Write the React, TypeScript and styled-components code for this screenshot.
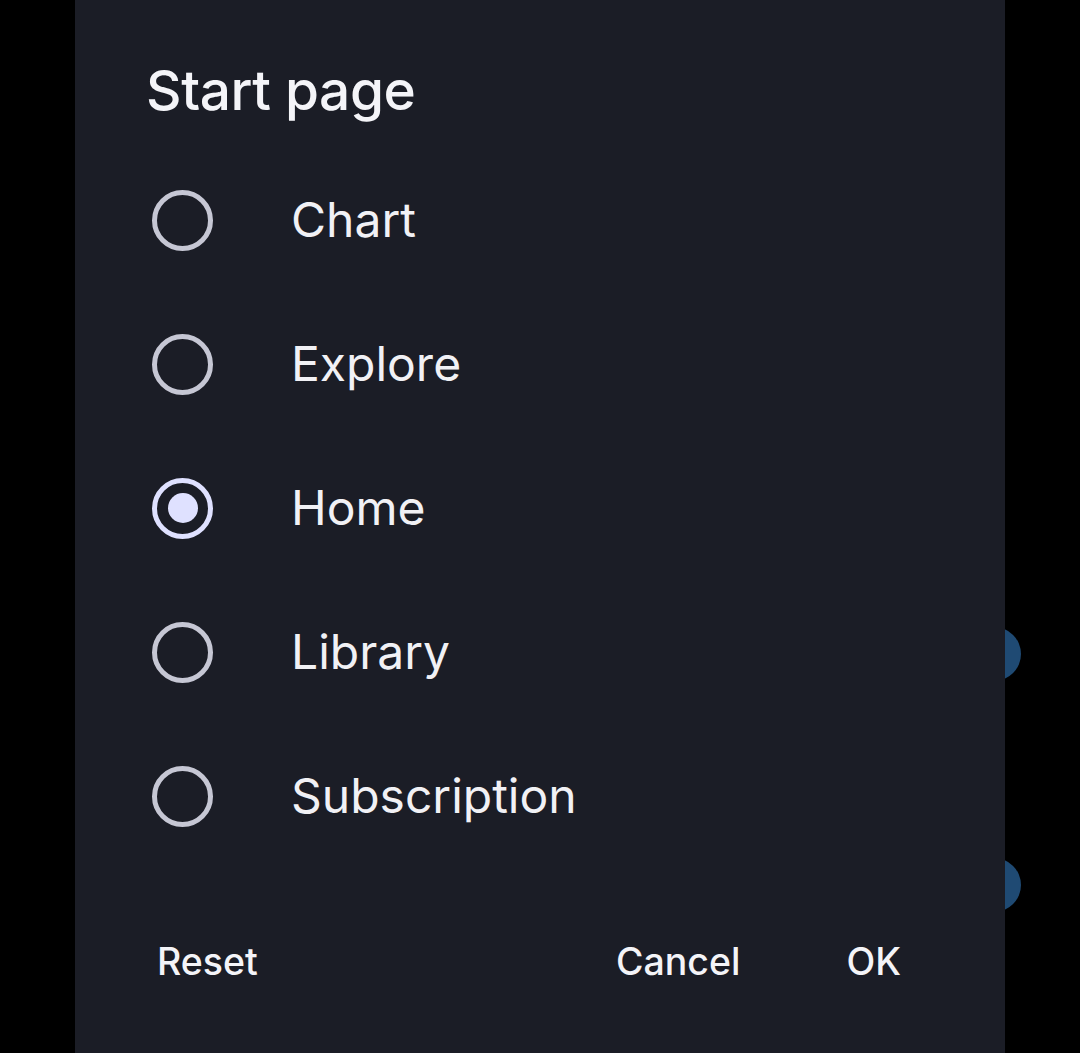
import React, { useState } from "react";
import styled, { createGlobalStyle } from "styled-components";

const Global = createGlobalStyle`
  html, body { margin: 0; padding: 0; background: #000; }
  body { font-family: "Inter", "Noto Sans", sans-serif; -webkit-font-smoothing: antialiased; }
`;

const Screen = styled.div`
  position: relative;
  width: 1080px;
  height: 1053px;
  background: #000;
  overflow: hidden;
`;

const BgDot = styled.div<{ $top: number }>`
  position: absolute;
  left: 967px;
  top: ${(p) => p.$top}px;
  width: 54px;
  height: 54px;
  border-radius: 50%;
  background: #1f4a73;
`;

const Dialog = styled.div`
  position: relative;
  margin-left: 75px;
  width: 930px;
  height: 1053px;
  background: #1b1d26;
  display: flex;
  flex-direction: column;
  box-sizing: border-box;
  padding-top: 58px;
`;

const Title = styled.h1`
  margin: 0 0 26px 71px;
  font-size: 55px;
  line-height: 64px;
  font-weight: 500;
  color: #f4f4f8;
  letter-spacing: -0.4px;
`;

const Options = styled.div`
  display: flex;
  flex-direction: column;
`;

const Row = styled.label`
  display: flex;
  align-items: center;
  height: 144px;
  padding-left: 77px;
  gap: 78px;
  cursor: pointer;
`;

const Radio = styled.span<{ $checked: boolean }>`
  box-sizing: border-box;
  width: 61px;
  height: 61px;
  border-radius: 50%;
  border: 5px solid ${(p) => (p.$checked ? "#dfe1ff" : "#c6c7d4")};
  display: flex;
  align-items: center;
  justify-content: center;
  flex-shrink: 0;
`;

const Dot = styled.span`
  width: 30px;
  height: 30px;
  border-radius: 50%;
  background: #dfe1ff;
`;

const Label = styled.span`
  font-size: 48px;
  line-height: 56px;
  font-weight: 400;
  color: #f1f1f5;
`;

const Actions = styled.div`
  display: flex;
  align-items: center;
  margin-top: 70px;
  padding: 0 104px 0 82px;
`;

const Spacer = styled.div`
  flex: 1;
`;

const TextButton = styled.button<{ $gap?: number }>`
  background: none;
  border: none;
  padding: 0;
  margin-left: ${(p) => p.$gap ?? 0}px;
  font-family: inherit;
  font-size: 37.5px;
  line-height: 48px;
  font-weight: 500;
  color: #f4f4f8;
  cursor: pointer;
`;

const options = ["Chart", "Explore", "Home", "Library", "Subscription"];

export default function App() {
  const [selected, setSelected] = useState("Home");
  return (
    <>
      <Global />
      <Screen>
        <BgDot $top={627} />
        <BgDot $top={858} />
        <Dialog>
          <Title>Start page</Title>
          <Options>
            {options.map((o) => (
              <Row key={o} onClick={() => setSelected(o)}>
                <Radio $checked={selected === o}>{selected === o && <Dot />}</Radio>
                <Label>{o}</Label>
              </Row>
            ))}
          </Options>
          <Actions>
            <TextButton>Reset</TextButton>
            <Spacer />
            <TextButton>Cancel</TextButton>
            <TextButton $gap={106}>OK</TextButton>
          </Actions>
        </Dialog>
      </Screen>
    </>
  );
}
